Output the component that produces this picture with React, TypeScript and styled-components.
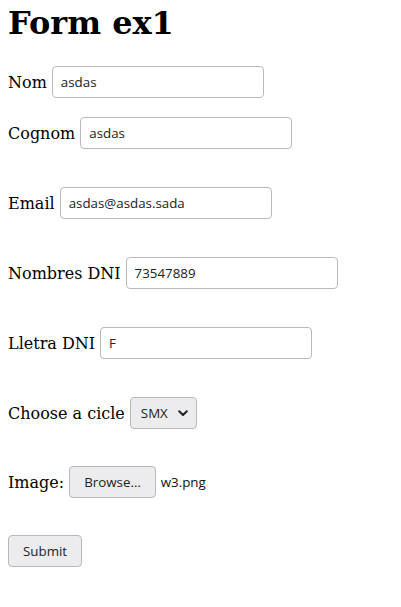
import React from "react";
import styled, { createGlobalStyle } from "styled-components";

const Global = createGlobalStyle`
  html, body { margin: 0; padding: 0; background: #fff; }
  body { padding: 8px; font-family: "DejaVu Serif", serif; font-size: 16px; color: #000; }
`;

const Title = styled.h1`
  margin: -3px 0 0 0;
  font-family: "DejaVu Serif", serif;
  font-size: 32px;
  font-weight: bold;
  line-height: 37px;
`;

const Form = styled.form`
  display: flex;
  flex-direction: column;
  align-items: flex-start;
  margin-top: 24px;
`;

const Row = styled.div<{ $gap: number }>`
  display: flex;
  align-items: center;
  gap: 5px;
  margin-top: ${(p) => p.$gap}px;
  height: 32px;
`;

const Label = styled.label`
  font-family: "DejaVu Serif", serif;
  font-size: 16px;
  color: #000;
`;

const controlFont = `"Open Sans", "Noto Sans", sans-serif`;

const TextInput = styled.input`
  box-sizing: border-box;
  width: 212px;
  height: 32px;
  margin: 0;
  padding: 0 8px;
  border: 1px solid #b9b9b9;
  border-radius: 4px;
  background: #fff;
  font-family: ${controlFont};
  font-size: 13.33px;
  color: #222;
  outline: none;
`;

const Select = styled.div`
  box-sizing: border-box;
  display: flex;
  align-items: center;
  gap: 10px;
  height: 32px;
  padding: 0 8px 0 10px;
  border: 1px solid #b9b9b9;
  border-radius: 4px;
  background: #ececef;
  font-family: ${controlFont};
  font-size: 13.33px;
  color: #222;
`;

const Button = styled.button`
  box-sizing: border-box;
  height: 32px;
  margin: 0;
  padding: 0 14px;
  border: 1px solid #b9b9b9;
  border-radius: 4px;
  background: #ececef;
  font-family: ${controlFont};
  font-size: 13.33px;
  color: #222;
`;

const FileName = styled.span`
  font-family: ${controlFont};
  font-size: 13.33px;
  color: #111;
`;

const Chevron = () => (
  <svg width="10" height="7" viewBox="0 0 10 7">
    <path d="M1.2 1.2 L5 5 L8.8 1.2" fill="none" stroke="#222" strokeWidth="2" strokeLinecap="round" strokeLinejoin="round" />
  </svg>
);

export default function App() {
  return (
    <>
      <Global />
      <Title>Form ex1</Title>
      <Form onSubmit={(e) => e.preventDefault()}>
        <Row $gap={0}>
          <Label>Nom</Label>
          <TextInput defaultValue="asdas" />
        </Row>
        <Row $gap={19}>
          <Label>Cognom</Label>
          <TextInput defaultValue="asdas" />
        </Row>
        <Row $gap={38}>
          <Label>Email</Label>
          <TextInput defaultValue="asdas@asdas.sada" />
        </Row>
        <Row $gap={38}>
          <Label>Nombres DNI</Label>
          <TextInput defaultValue="73547889" />
        </Row>
        <Row $gap={38}>
          <Label>Lletra DNI</Label>
          <TextInput defaultValue="F" />
        </Row>
        <Row $gap={38}>
          <Label>Choose a cicle</Label>
          <Select>
            SMX
            <Chevron />
          </Select>
        </Row>
        <Row $gap={37}>
          <Label>Image:</Label>
          <Button type="button">Browse…</Button>
          <FileName>w3.png</FileName>
        </Row>
        <Row $gap={37}>
          <Button type="submit">Submit</Button>
        </Row>
      </Form>
    </>
  );
}
